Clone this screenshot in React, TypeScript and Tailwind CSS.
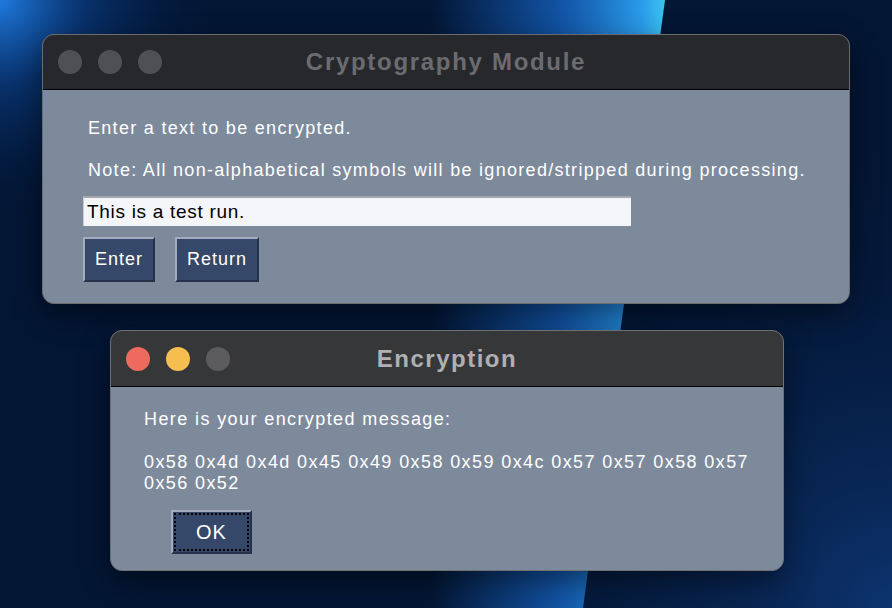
import React from "react";

const font = { fontFamily: '"Liberation Sans", Arial, sans-serif' };

function Wallpaper() {
  return (
    <svg className="absolute inset-0" width="892" height="608" viewBox="0 0 892 608">
      <defs>
        <radialGradient id="corner" cx="0" cy="0" r="220" gradientUnits="userSpaceOnUse">
          <stop offset="0" stopColor="#1f7be0" />
          <stop offset="0.4" stopColor="#0a3b80" stopOpacity="0.7" />
          <stop offset="1" stopColor="#03163a" stopOpacity="0" />
        </radialGradient>
        <radialGradient id="glowRight" cx="892" cy="608" r="500" gradientUnits="userSpaceOnUse">
          <stop offset="0" stopColor="#0d3470" />
          <stop offset="1" stopColor="#031533" stopOpacity="0" />
        </radialGradient>
        <linearGradient id="streak" x1="430" y1="0" x2="665" y2="0" gradientUnits="userSpaceOnUse">
          <stop offset="0" stopColor="#1565c8" stopOpacity="0" />
          <stop offset="0.55" stopColor="#1767c8" stopOpacity="0.75" />
          <stop offset="0.9" stopColor="#2a9bea" />
          <stop offset="1" stopColor="#3cc3f0" />
        </linearGradient>
      </defs>
      <rect width="892" height="608" fill="#031634" />
      <rect width="892" height="608" fill="url(#glowRight)" />
      <rect width="892" height="608" fill="url(#corner)" />
      <polygon points="420,0 665,0 583,608 360,608" fill="url(#streak)" />
    </svg>
  );
}

function Lights({ active }: { active: boolean }) {
  const colors = active ? ["bg-[#ee6a5f]", "bg-[#f5be4f]", "bg-[#5c5c5f]"] : ["bg-[#4f5054]", "bg-[#4f5054]", "bg-[#4f5054]"];
  return (
    <div className="flex gap-4">
      {colors.map((c, i) => (
        <span key={i} className={`block h-6 w-6 rounded-full ${c}`} />
      ))}
    </div>
  );
}

function TkButton({ label, className }: { label: string; className: string }) {
  return (
    <button
      type="button"
      className={`flex items-center justify-center border-2 border-t-[#a3adbf] border-l-[#a3adbf] border-b-[#26324c] border-r-[#26324c] bg-[#364869] text-[18px] tracking-[1px] text-white ${className}`}
    >
      {label}
    </button>
  );
}

export default function App() {
  return (
    <div className="relative h-[608px] w-[892px] overflow-hidden" style={font}>
      <Wallpaper />

      {/* main window */}
      <div className="absolute left-[42px] top-[34px] flex h-[270px] w-[808px] flex-col overflow-hidden rounded-[12px] border border-[#6b6c70] bg-[#7d8a9c] shadow-[0_10px_30px_rgba(0,0,0,0.45)]">
        <div className="relative flex h-[55px] shrink-0 items-center border-b border-black bg-[#27282c] px-[15px]">
          <Lights active={false} />
          <div className="absolute inset-0 flex items-center justify-center text-[24px] font-bold tracking-[1.7px] text-[#6b6c70]">
            Cryptography Module
          </div>
        </div>
        <div className="flex flex-col pl-[40px] pt-[28px] text-[18px] tracking-[1.3px] text-white">
          <p className="pl-[5px] leading-[20px]">Enter a text to be encrypted.</p>
          <p className="mt-[22px] pl-[5px] leading-[20px]">
            Note: All non-alphabetical symbols will be ignored/stripped during processing.
          </p>
          <div className="mt-[16px] flex h-[30px] w-[548px] items-center border-t-2 border-l border-t-[#a6a8ad] border-l-[#c9cbd0] bg-[#f4f5f8] pl-[3px] text-[19px] tracking-[0.7px] text-black">
            This is a test run.
          </div>
          <div className="mt-[11px] flex gap-[20px]">
            <TkButton label="Enter" className="h-[45px] w-[72px]" />
            <TkButton label="Return" className="h-[45px] w-[84px]" />
          </div>
        </div>
      </div>

      {/* dialog */}
      <div className="absolute left-[110px] top-[330px] flex h-[241px] w-[674px] flex-col overflow-hidden rounded-[12px] border border-[#6f7074] bg-[#7d8a9c] shadow-[0_10px_30px_rgba(0,0,0,0.45)]">
        <div className="relative flex h-[56px] shrink-0 items-center border-b border-black bg-[#363739] px-[15px]">
          <Lights active />
          <div className="absolute inset-0 flex items-center justify-center text-[24px] font-bold tracking-[1.5px] text-[#b0b0b2]">
            Encryption
          </div>
        </div>
        <div className="flex flex-col pl-[33px] pt-[22px] text-[18px] tracking-[1.4px] text-white">
          <p className="leading-[20px]">Here is your encrypted message:</p>
          <p className="mt-[23px] w-[625px] leading-[21px]">
            0x58 0x4d 0x4d 0x45 0x49 0x58 0x59 0x4c 0x57 0x57 0x58 0x57 0x56 0x52
          </p>
          <div className="ml-[27px] mt-[16px] h-[44px] w-[81px] border-2 border-t-[#a3adbf] border-l-[#a3adbf] border-b-[#26324c] border-r-[#26324c] bg-[#364869] p-[1px]">
            <button
              type="button"
              className="flex h-full w-full items-center justify-center border-2 border-dotted border-black text-[20px] tracking-[1px] text-white"
            >
              OK
            </button>
          </div>
        </div>
      </div>
    </div>
  );
}
